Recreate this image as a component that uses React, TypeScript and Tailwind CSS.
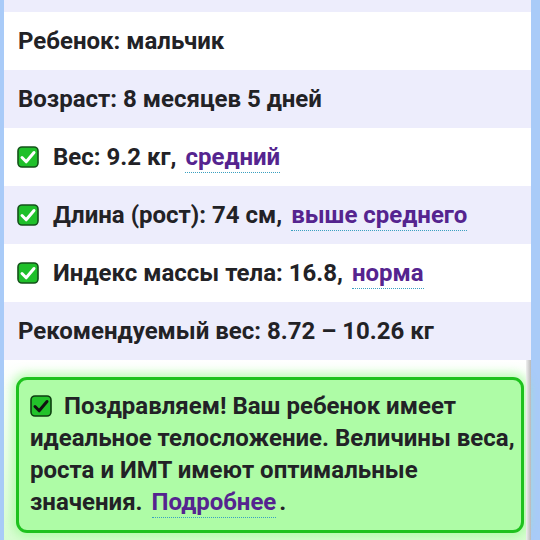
const Check = ({ dark = false }: { dark?: boolean }) => (
  <svg width="22" height="22" viewBox="0 0 22 22" className="shrink-0">
    <rect x="1" y="1" width="20" height="20" rx="4" fill={dark ? "#22c22a" : "#1fc02a"} stroke={dark ? "#0d3d10" : "#14521a"} strokeWidth="1.6" />
    <path d="M5 11.5 L9.2 15.8 L17 6.5" fill="none" stroke={dark ? "#111" : "#fff"} strokeWidth="3" strokeLinecap="round" strokeLinejoin="round" />
  </svg>
);

const Lnk = ({ children }: { children: React.ReactNode }) => (
  <span className="ml-[9px] text-[#55248f] border-b border-dotted border-[#3aa0c0] pb-[1px]">{children}</span>
);

function Row({ shade, check, children }: { shade?: boolean; check?: boolean; children: React.ReactNode }) {
  return (
    <div className={`flex h-[58px] items-center gap-[14px] ${check ? "pl-[13px]" : "pl-[14px]"} ${shade ? "bg-[#ededfc]" : "bg-white"}`}>
      {check && <Check />}
      <div className="leading-[28px]">{children}</div>
    </div>
  );
}

export default function App() {
  return (
    <div
      className="flex h-[540px] w-[540px] overflow-hidden bg-[#a9cbf8] text-[24px] font-bold text-[#222226]"
      style={{ fontFamily: "Roboto, 'Noto Sans', sans-serif" }}
    >
      <div className="w-[4px] shrink-0" />
      <div className="flex w-[527px] shrink-0 flex-col">
        <div className="h-[12px] bg-[#ededfc]" />
        <Row>Ребенок: мальчик</Row>
        <Row shade>Возраст: 8 месяцев 5 дней</Row>
        <Row check>
          Вес: 9.2 кг,<Lnk>средний</Lnk>
        </Row>
        <Row shade check>
          Длина (рост): 74 см,<Lnk>выше среднего</Lnk>
        </Row>
        <Row check>
          Индекс массы тела: 16.8,<Lnk>норма</Lnk>
        </Row>
        <Row shade>Рекомендуемый вес: 8.72 – 10.26 кг</Row>
        <div className="flex flex-1 bg-gradient-to-b from-white to-[#d8fdd2]">
          <div className="flex-1 pl-[12px] pr-[2px] pt-[17px]">
            <div className="rounded-[11px] border-[3px] border-[#1ec21e] bg-[#aefca6] pl-[11px] pr-[1px] pt-[10px] pb-[12px] leading-[32px] shadow-[0_0_10px_4px_rgba(150,250,140,0.6)]">
              <span className="mr-[12px] inline-flex align-[-3px]">
                <Check dark />
              </span>
              Поздравляем! Ваш ребенок имеет идеальное телосложение. Величины веса, роста и ИМТ имеют оптимальные значения.
              <Lnk>Подробнее</Lnk>
              <span className="ml-[3px]">.</span>
            </div>
          </div>
          <div className="w-[5px] bg-gradient-to-r from-[#f0f0f0] to-[#b8b8b8]" />
        </div>
      </div>
    </div>
  );
}
